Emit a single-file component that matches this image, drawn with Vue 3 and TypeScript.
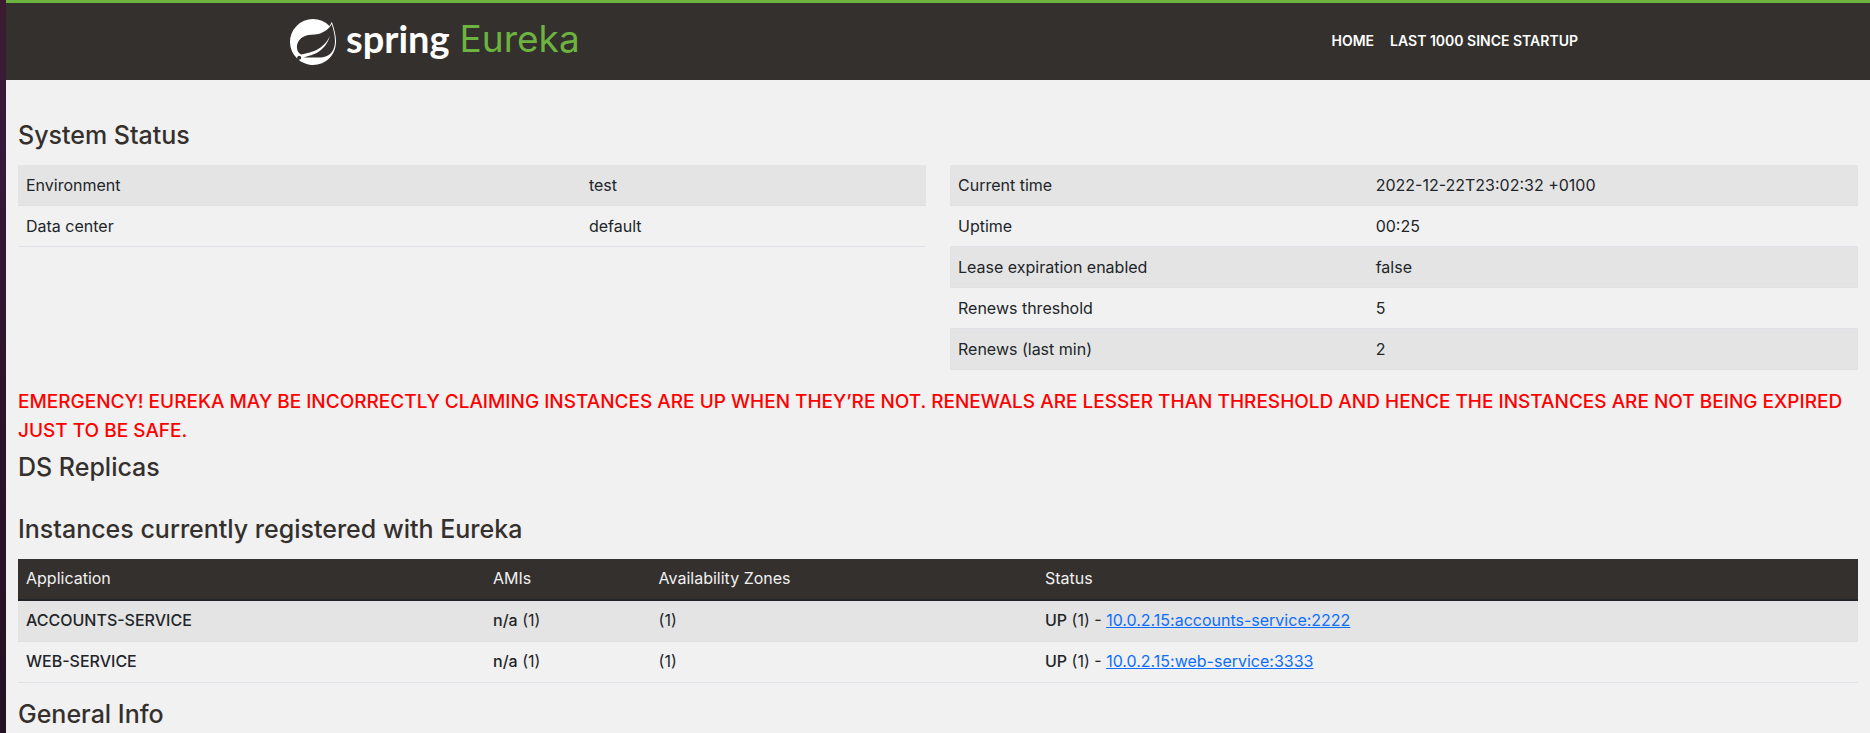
<script setup lang="ts">
interface Fact {
  label: string
  value: string
}

interface Instance {
  app: string
  amis: string
  zones: string
  count: number
  id: string
}

const environment: Fact[] = [
  { label: 'Environment', value: 'test' },
  { label: 'Data center', value: 'default' },
]

const runtime: Fact[] = [
  { label: 'Current time', value: '2022-12-22T23:02:32 +0100' },
  { label: 'Uptime', value: '00:25' },
  { label: 'Lease expiration enabled', value: 'false' },
  { label: 'Renews threshold', value: '5' },
  { label: 'Renews (last min)', value: '2' },
]

const instances: Instance[] = [
  { app: 'ACCOUNTS-SERVICE', amis: 'n/a', zones: '(1)', count: 1, id: '10.0.2.15:accounts-service:2222' },
  { app: 'WEB-SERVICE', amis: 'n/a', zones: '(1)', count: 1, id: '10.0.2.15:web-service:3333' },
]
</script>

<template>
  <div class="page">
    <header class="navbar">
      <div class="container">
        <a class="brand" href="#" aria-label="Spring Eureka">
          <svg class="leaf" viewBox="0 0 24 24" aria-hidden="true">
            <path
              fill="#fff"
              d="M21.8537 1.4158a10.4504 10.4504 0 0 1-1.284 2.2471A11.9666 11.9666 0 1 0 3.8518 20.7757l.4445.3951a11.9543 11.9543 0 0 0 19.6316-8.2971c.3457-3.0126-.568-6.8649-2.0742-11.458zM5.5805 20.8745a1.0174 1.0174 0 1 1-.1482-1.4323 1.0396 1.0396 0 0 1 .1482 1.4323zm16.1991-3.5806c-2.9385 3.9263-9.2601 2.5928-13.2852 2.7904 0 0-.7161.0494-1.4323.1481 0 0 .2717-.1234.6174-.2469 2.8398-.9877 4.1732-1.1853 5.9018-2.0743 3.2349-1.6545 6.4698-5.2844 7.1118-9.0379-1.2347 3.6053-4.9881 6.7167-8.3959 7.9761-2.3459.8643-6.5685 1.7039-6.5685 1.7039l-.1729-.0988c-2.8645-1.4076-2.9632-7.6304 2.2718-9.6306 2.2966-.889 4.4696-.395 6.9637-.9877 2.6422-.6174 5.7043-2.5929 6.939-5.1857 1.3828 4.1732 3.062 10.643.0493 14.6434z"
            />
          </svg>
          <span class="spring">spring</span>
          <span class="eureka">Eureka</span>
        </a>
        <nav class="links">
          <a href="#">HOME</a>
          <a href="#">LAST 1000 SINCE STARTUP</a>
        </nav>
      </div>
    </header>

    <main class="content">
      <h1>System Status</h1>
      <div class="row">
        <table class="facts env">
          <tbody>
            <tr v-for="fact in environment" :key="fact.label">
              <th scope="row">{{ fact.label }}</th>
              <td>{{ fact.value }}</td>
            </tr>
          </tbody>
        </table>
        <table class="facts runtime">
          <tbody>
            <tr v-for="fact in runtime" :key="fact.label">
              <th scope="row">{{ fact.label }}</th>
              <td>{{ fact.value }}</td>
            </tr>
          </tbody>
        </table>
      </div>

      <h4 class="alert">
        EMERGENCY! EUREKA MAY BE INCORRECTLY CLAIMING INSTANCES ARE UP WHEN THEY’RE NOT. RENEWALS ARE LESSER
        THAN THRESHOLD AND HENCE THE INSTANCES ARE NOT BEING EXPIRED JUST TO BE SAFE.
      </h4>

      <h1 class="replicas">DS Replicas</h1>

      <h1>Instances currently registered with Eureka</h1>
      <table class="instances">
        <thead>
          <tr>
            <th scope="col" class="col-app">Application</th>
            <th scope="col" class="col-ami">AMIs</th>
            <th scope="col" class="col-zone">Availability Zones</th>
            <th scope="col">Status</th>
          </tr>
        </thead>
        <tbody>
          <tr v-for="item in instances" :key="item.app">
            <td class="strong">{{ item.app }}</td>
            <td><b>{{ item.amis }}</b> ({{ item.count }})</td>
            <td>{{ item.zones }}</td>
            <td>
              <b>UP</b> ({{ item.count }}) - <a href="#">{{ item.id }}</a>
            </td>
          </tr>
        </tbody>
      </table>

      <h1 class="general">General Info</h1>
    </main>
  </div>
</template>

<style>
html {
  background: #f1f1f1;
  overflow: hidden;
}
body {
  margin: 0;
}
</style>

<style scoped>
.page {
  box-sizing: border-box;
  min-height: 100vh;
  border-left: 6px solid;
  border-image: linear-gradient(#3a1b30, #35193a 20%, #2c1329 55%, #241124) 1;
  background: #f1f1f1;
  color: #212529;
  font: 16px/24px Inter, 'Noto Sans', sans-serif;
}
.navbar {
  border-top: 3px solid #6db33f;
  background: #34302d;
}
.container {
  display: flex;
  align-items: center;
  justify-content: space-between;
  box-sizing: border-box;
  max-width: 1320px;
  height: 77px;
  margin: 0 auto;
  padding: 0 12px;
}
.brand {
  display: flex;
  align-items: flex-start;
  color: #fff;
  text-decoration: none;
}
.leaf {
  width: 46px;
  height: 46px;
  margin-right: 10px;
}
.spring {
  font: 700 38px/38px Lato, sans-serif;
}
.eureka {
  margin-left: 10px;
  color: #6db33f;
  font: 400 37px/40px Inter, sans-serif;
}
.links {
  display: flex;
}
.links a {
  padding: 7px 8px 9px;
  color: #fff;
  font: 600 14px/22px Inter, sans-serif;
  text-decoration: none;
}
.content {
  padding: 40px 12px 0;
}
h1 {
  margin: 0 0 15px;
  color: #34302d;
  font: 500 25px/30px Inter, sans-serif;
}
.row {
  display: grid;
  grid-template-columns: 1fr 1fr;
  gap: 24px;
  align-items: start;
  margin-bottom: 17px;
}
table {
  width: 100%;
  border-collapse: separate;
  border-spacing: 0;
  table-layout: fixed;
}
th,
td {
  box-sizing: border-box;
  padding: 8px;
  border-bottom: 1px solid #dee2e6;
  font-weight: 400;
  text-align: left;
}
tbody tr:nth-child(odd) > * {
  border-bottom-color: #dfe0e1;
  background: #e4e4e4;
}
.env th {
  width: 62%;
}
.runtime th {
  width: 46%;
}
.alert {
  margin: 0 0 7px;
  color: #f00;
  font-size: 19px;
  font-weight: 500;
  line-height: 29px;
}
.replicas {
  margin-bottom: 32px;
}
.instances th,
.instances td {
  padding: 7px 8px 9px;
}
.instances thead th {
  border-bottom: 2px solid #212529;
  background: #34302d;
  color: #f1f1f1;
}
.instances .col-app {
  width: 467px;
}
.instances .col-ami {
  width: 9%;
}
.instances .col-zone {
  width: 21%;
}
.strong,
b {
  font-weight: 500;
}
td a {
  color: #0d6efd;
}
.general {
  margin: 16px 0 0;
}
</style>
